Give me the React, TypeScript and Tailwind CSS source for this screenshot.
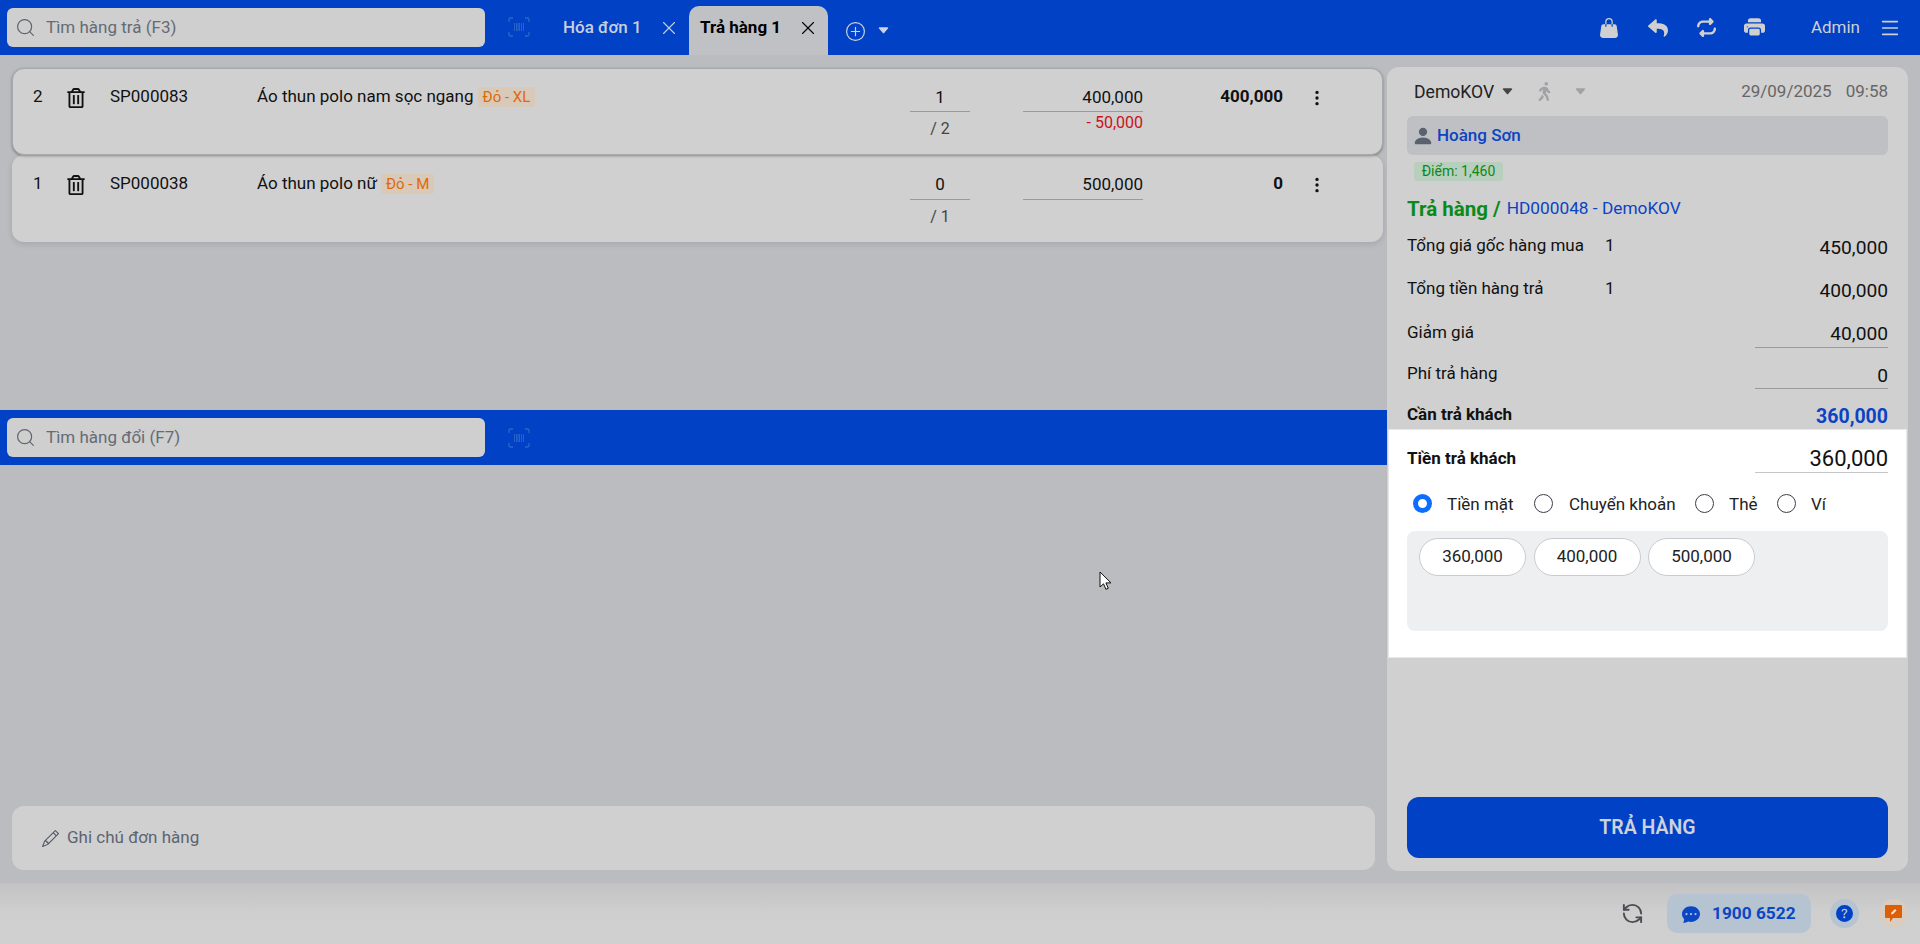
import React from 'react';
import { X, Menu, Search, RefreshCcw } from 'lucide-react';
import {
  BsHandbagFill,
  BsPrinterFill,
  BsThreeDotsVertical,
  BsPlusCircle,
  BsCaretDownFill,
  BsPersonFill,
  BsChatDotsFill,
  BsQuestionCircleFill,
  BsPencil,
} from 'react-icons/bs';
import { FaReply, FaRegTrashAlt, FaWalking } from 'react-icons/fa';
import { FaRepeat } from 'react-icons/fa6';

const BarcodeIcon = () => (
  <svg width="22" height="20" viewBox="0 0 22 20" fill="none" stroke="#2a68c8" strokeWidth="1.3">
    <path d="M1 5V2.500A1.500 1.500 0 0 1 2.500 1H5M17 1h2.500A1.500 1.500 0 0 1 21 2.500V5M21 15v2.500A1.500 1.500 0 0 1 19.500 19H17M5 19H2.500A1.500 1.500 0 0 1 1 17.500V15" />
    <path d="M6.500 6v8M8.500 6v8M10 6v8M11.500 6v8M13.500 6v8M15.500 6v8" strokeWidth="0.9" />
  </svg>
);

const SearchBox = ({ placeholder }: { placeholder: string }) => (
  <div className="flex h-[39px] w-[478px] items-center rounded-[6px] bg-[#cfcfcf] pl-[8px]">
    <Search size={21} strokeWidth={1.4} className="text-[#5f6670]" />
    <span className="ml-[10px] text-[17px] text-[#646b75]">{placeholder}</span>
  </div>
);

type LineProps = {
  index: number;
  code: string;
  name: string;
  variant: string;
  qty: number;
  max: number;
  price: string;
  discount?: string;
  total: string;
  boxClass: string;
};

const LineContent = ({ index, code, name, variant, qty, max, price, discount, total, boxClass }: LineProps) => (
  <>
    <div className="-mt-[1px] w-[34px] text-[17px] leading-[20px]">{index}</div>
    <div className="w-[18px] pt-[1px] text-[#111]">
      <FaRegTrashAlt size={20} className="-ml-[1px]" />
    </div>
    <div className="-mt-[1px] ml-[25px] w-[147px] text-[17px] leading-[20px]">{code}</div>
    <div className="-mt-[1px] flex w-[653px] items-start">
      <span className="text-[17px] leading-[20px]">{name}</span>
      <span className="ml-[4px] mt-[1px] rounded-[3px] bg-[#d9c9b8] px-[5px] text-[15px] leading-[20px] text-[#dd6a08]">
        {variant}
      </span>
    </div>
    <div className="w-[60px] text-center">
      <div className={`border-b border-[#9a9a9e] text-[17px] leading-[20px] ${boxClass}`}>{qty}</div>
      <div className="mt-[7px] text-[16px] leading-[20px] text-[#444]">/ {max}</div>
    </div>
    <div className="ml-[53px] w-[120px] text-right">
      <div className={`border-b border-[#9a9a9e] text-[17px] leading-[20px] ${boxClass}`}>{price}</div>
      {discount && <div className="mt-[1px] text-[16px] leading-[20px] text-[#cc1020]">{discount}</div>}
    </div>
    <div className="-mt-[1px] w-[140px] text-right text-[17px] font-bold leading-[20px]">{total}</div>
    <div className="flex w-[68px] justify-center pt-[2px]">
      <BsThreeDotsVertical size={18} />
    </div>
  </>
);

const SummaryRow = ({
  label,
  count,
  value,
  rowClass,
  valueClass,
  labelClass,
  underline,
}: {
  label: string;
  count?: number;
  value: string;
  rowClass: string;
  valueClass: string;
  labelClass?: string;
  underline?: boolean;
}) => (
  <div className={`flex items-start justify-between ${rowClass}`}>
    <div className={`flex text-[17px] leading-[22px] text-[#111] ${labelClass ?? ''}`}>
      <span className="w-[198px]">{label}</span>
      {count !== undefined && <span>{count}</span>}
    </div>
    <div
      className={`w-[133px] text-right text-[19.200px] text-[#111] ${valueClass} ${underline ? 'border-b border-[#9a9a9e]' : ''}`}
    >
      {value}
    </div>
  </div>
);

const Radio = ({ label, checked, labelClass }: { label: string; checked?: boolean; labelClass: string }) => (
  <div className="flex items-center">
    {checked ? (
      <span className="h-[19px] w-[19px] rounded-full border-[5px] border-[#0d6efd] bg-white" />
    ) : (
      <span className="h-[19px] w-[19px] rounded-full border-[1.5px] border-[#3a3f4a] bg-white" />
    )}
    <span className={`text-[17px] leading-[20px] text-[#222] ${labelClass}`}>{label}</span>
  </div>
);

const AmountButton = ({ value }: { value: string }) => (
  <div className="flex h-[38px] w-[107px] items-center justify-center rounded-full border border-[#c9cbd0] bg-white text-[17px] text-[#222]">
    {value}
  </div>
);

const App = () => {
  return (
    <div className="relative flex h-[944px] w-[1920px] flex-col overflow-hidden bg-[#bbbcc0] font-[Roboto,sans-serif] text-[16px] text-[#111]">
      {/* top bar */}
      <header className="flex h-[55px] items-stretch bg-[#0041c5] pl-[7px] pr-[19px]">
        <div className="pt-[8px]">
          <SearchBox placeholder="Tìm hàng trả (F3)" />
        </div>
        <div className="ml-[23px] pt-[17px]">
          <BarcodeIcon />
        </div>
        <div className="ml-[33px] flex w-[126px] items-start pt-[17px] text-[17px] font-medium leading-[20px] text-[#c9cfdc]">
          <span className="w-[95px]">Hóa đơn 1</span>
          <X size={22} strokeWidth={1.2} />
        </div>
        <div className="flex h-[49px] w-[139px] self-end rounded-t-[10px] bg-[#c0c1c4] pl-[11px] pt-[11px] text-[17px] font-bold leading-[20px] text-black">
          <span className="w-[97px]">Trả hàng 1</span>
          <X size={22} strokeWidth={1.2} />
        </div>
        <div className="ml-[18px] flex items-start pt-[22px] text-[#d0d4de]">
          <BsPlusCircle size={19} />
          <BsCaretDownFill size={13} className="ml-[12px] mt-[2px]" />
        </div>
        <div className="ml-auto flex items-center text-[#d0d0d0]">
          <BsHandbagFill size={20} />
          <FaReply size={20} className="ml-[29px]" />
          <FaRepeat size={19} className="ml-[29px]" />
          <BsPrinterFill size={21} className="ml-[28px]" />
          <span className="ml-[46px] text-[17px] font-normal">Admin</span>
          <Menu size={22} strokeWidth={1.8} className="ml-[19px]" />
        </div>
      </header>

      <main className="flex h-[828px]">
        {/* left side */}
        <div className="flex w-[1387px] flex-col">
          <section className="h-[355px] pl-[12px] pr-[4px] pt-[13px]">
            <div className="relative z-10 flex h-[87px] rounded-[12px] border border-[#a8a9ad] bg-[#d0d0d0] pl-[20px] pt-[18px] shadow-[0_1px_3px_rgba(0,0,0,0.35)]">
              <LineContent
                index={2}
                code="SP000083"
                name="Áo thun polo nam sọc ngang"
                variant="Đỏ - XL"
                qty={1}
                max={2}
                price="400,000"
                discount="- 50,000"
                total="400,000"
                boxClass="h-[25px]"
              />
            </div>
            <div className="flex h-[87px] rounded-[12px] bg-[#d0d0d0] pl-[21px] pt-[19px] shadow-[0_2px_6px_rgba(0,0,0,0.12)]">
              <LineContent
                index={1}
                code="SP000038"
                name="Áo thun polo nữ"
                variant="Đỏ - M"
                qty={0}
                max={1}
                price="500,000"
                total="0"
                boxClass="h-[26px]"
              />
            </div>
          </section>

          <section className="flex h-[55px] items-center bg-[#0041c5] pl-[7px]">
            <SearchBox placeholder="Tìm hàng đổi (F7)" />
            <div className="ml-[23px]">
              <BarcodeIcon />
            </div>
          </section>

          <section className="flex flex-1 flex-col justify-end pb-[13px] pl-[12px] pr-[12px]">
            <div className="flex h-[64px] items-center rounded-[12px] bg-[#d0d0d0] pl-[30px]">
              <BsPencil size={17} className="text-[#4f5763]" />
              <span className="ml-[8px] text-[17px] text-[#5c6470]">Ghi chú đơn hàng</span>
            </div>
          </section>
        </div>

        {/* right side */}
        <aside className="mb-[12px] mr-[12px] mt-[12px] flex w-[521px] flex-col rounded-[12px] bg-[#d0d0d0] px-[20px]">
          <div className="flex h-[49px] items-center">
            <span className="ml-[7px] text-[17.6px] leading-[20px] text-[#222]">DemoKOV</span>
            <BsCaretDownFill size={13} className="ml-[7px] text-[#444]" />
            <FaWalking size={19} className="ml-[21px] text-[#a0a2a6]" />
            <BsCaretDownFill size={13} className="ml-[20px] text-[#a0a2a6]" />
            <span className="ml-auto text-[17px] text-[#666]">29/09/2025</span>
            <span className="ml-[14px] text-[17px] text-[#666]">09:58</span>
          </div>

          <div className="flex h-[39px] items-center rounded-[6px] bg-[#bfc0c3] pl-[5px]">
            <BsPersonFill size={22} className="text-[#5a626e]" />
            <span className="ml-[3px] text-[17px] font-medium text-[#0b43c4]">Hoàng Sơn</span>
          </div>

          <div className="ml-[7px] mt-[7px] flex h-[19px] w-[89px] items-center justify-center rounded-[3px] bg-[#b9cfbd] text-[14px] text-[#0a8a1a]">
            Điểm: 1,460
          </div>

          <div className="mt-[14px] flex h-[28px] items-center">
            <span className="text-[20.500px] font-bold text-[#0a8a1a]">Trả hàng /</span>
            <span className="ml-[6px] text-[17.3px] text-[#0b43c4]">HD000048 - DemoKOV</span>
          </div>

          <div className="h-[11px]" />
          <SummaryRow label="Tổng giá gốc hàng mua" count={1} value="450,000" rowClass="h-[45px]" valueClass="leading-[28px]" />
          <SummaryRow label="Tổng tiền hàng trả" count={1} value="400,000" rowClass="h-[42px]" valueClass="leading-[24px]" labelClass="-mt-[2px]" />
          <SummaryRow label="Giảm giá" value="40,000" rowClass="h-[43px]" valueClass="leading-[26px]" underline />
          <SummaryRow label="Phí trả hàng" value="0" rowClass="h-[39px]" valueClass="leading-[24px]" labelClass="-mt-[2px]" underline />
          <div className="flex h-[26px] items-start justify-between">
            <span className="text-[17px] font-bold leading-[22px] text-[#111]">Cần trả khách</span>
            <span className="text-[19.500px] font-bold leading-[28px] text-[#0b43c4]">360,000</span>
          </div>

          {/* payment panel */}
          <div className="-mx-[19px] h-[229px] border border-[#e8e8e8] bg-white px-[18px] pt-[14px]">
            <div className="flex h-[29px] items-start justify-between">
              <span className="text-[17px] font-bold leading-[29px] text-[#111]">Tiền trả khách</span>
              <span className="h-[29px] w-[133px] border-b border-[#c5c6ca] text-right text-[22px] leading-[29px] text-[#111]">
                360,000
              </span>
            </div>
            <div className="ml-[6px] mt-[21px] flex h-[19px]">
              <Radio label="Tiền mặt" checked labelClass="ml-[15px] w-[87px]" />
              <Radio label="Chuyển khoản" labelClass="ml-[16px] w-[126px]" />
              <Radio label="Thẻ" labelClass="ml-[15px] w-[48px]" />
              <Radio label="Ví" labelClass="ml-[15px]" />
            </div>
            <div className="mt-[18px] flex h-[100px] items-start gap-[7.5px] rounded-[8px] bg-[#eeeff1] px-[12px] pt-[7px]">
              <AmountButton value="360,000" />
              <AmountButton value="400,000" />
              <AmountButton value="500,000" />
            </div>
          </div>

          <div className="mb-[13px] mt-auto flex h-[61px] items-center justify-center rounded-[12px] bg-[#0041c5] text-[19.500px] font-semibold text-[#cdd2dc]">
            TRẢ HÀNG
          </div>
        </aside>
      </main>

      {/* bottom bar */}
      <footer className="flex h-[61px] items-center justify-end bg-gradient-to-b from-[#c3c3c5] via-[#cfcfcf] to-[#d0d0d0] pr-[12px]">
        <RefreshCcw size={23} strokeWidth={2} className="text-[#4a4d52]" />
        <div className="ml-[23px] flex h-[39px] w-[144px] items-center rounded-[10px] bg-[#b6c3d0] pl-[15px] text-[#0b47c4]">
          <BsChatDotsFill size={18} />
          <span className="ml-[12px] text-[17.3px] font-bold">1900 6522</span>
        </div>
        <div className="ml-[19px] flex h-[29px] w-[29px] items-center justify-center rounded-full bg-[#b6c3d0]">
          <BsQuestionCircleFill size={17} className="text-[#0041c5]" />
        </div>
        <div className="ml-[20px] flex h-[29px] w-[29px] items-center justify-center rounded-full bg-[#d9cdbf]">
          <svg width="17" height="17" viewBox="0 0 17 17">
            <path d="M1 0h15a1 1 0 0 1 1 1v11a1 1 0 0 1-1 1H8l-3 4v-4H1a1 1 0 0 1-1-1V1a1 1 0 0 1 1-1z" fill="#dc5f08" />
            <path d="M6 9.500l.5-2 3.500-3.500 1.500 1.500-3.500 3.500z" fill="#f5e6d8" />
          </svg>
        </div>
      </footer>

      {/* mouse pointer */}
      <svg className="absolute left-[1099px] top-[571px]" width="13" height="20" viewBox="0 0 13 20">
        <path d="M1 1v15l3.500-3.200 2.400 5.500 2.400-1-2.400-5.400H12z" fill="#fff" stroke="#111" strokeWidth="1" />
      </svg>
    </div>
  );
};

export default App;
